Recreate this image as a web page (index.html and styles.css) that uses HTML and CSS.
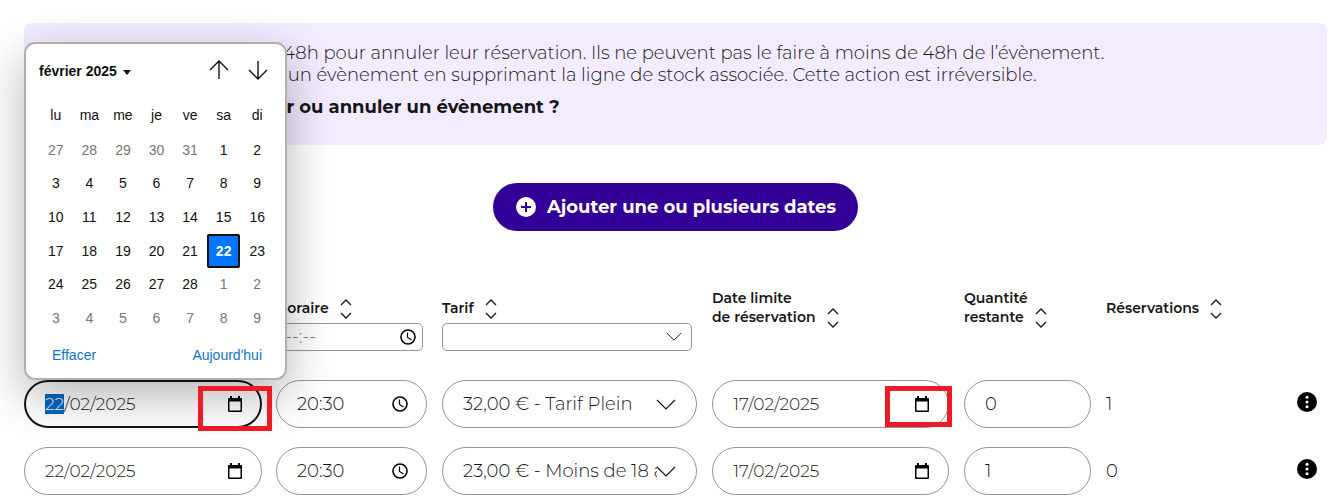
FILE: index.html
```
<!DOCTYPE html>
<html lang="fr">
<head>
    <meta charset="UTF-8">
    <meta name="viewport" content="width=device-width, initial-scale=1.0">
    <title>Dates et capacités</title>
    <link rel="stylesheet" href="styles.css">
</head>
<body>
    <svg class="sprite" aria-hidden="true">
        <symbol id="calendar" viewBox="0 0 14 16">
            <path fill-rule="evenodd" d="M2 0h2v2h6V0h2v2h1q1 0 1 1v12q0 1-1 1H1q-1 0-1-1V3q0-1 1-1h1zM1.500 5.500v9h11v-9z"/>
        </symbol>
        <symbol id="clock" viewBox="0 0 16 16">
            <circle cx="8" cy="8" r="7" fill="none" stroke="currentColor" stroke-width="1.600"/>
            <path d="M7.500 3.500v5l4 2.500" fill="none" stroke="currentColor" stroke-width="1.200"/>
        </symbol>
        <symbol id="sort" viewBox="0 0 12 20">
            <path d="M1 6l5-5 5 5M1 14l5 5 5-5" fill="none" stroke="currentColor" stroke-width="1.300"/>
        </symbol>
        <symbol id="chevron" viewBox="0 0 20 12">
            <path d="M1 1l9 9 9-9" fill="none" stroke="currentColor" stroke-width="1.200"/>
        </symbol>
        <symbol id="dots" viewBox="0 0 20 20">
            <circle cx="10" cy="10" r="10"/>
            <g fill="#fff"><circle cx="10" cy="5.200" r="1.500"/><circle cx="10" cy="10" r="1.500"/><circle cx="10" cy="14.800" r="1.500"/></g>
        </symbol>
    </svg>

    <main class="page">
        <section class="banner">
            <p>Les bénéficiaires ont 48h pour annuler leur réservation. Ils ne peuvent pas le faire à moins de 48h de l’évènement.</p>
            <p>Vous pouvez annuler un évènement en supprimant la ligne de stock associée. Cette action est irréversible.</p>
            <p class="question">Comment désactiver ou annuler un évènement ?</p>
        </section>

        <button type="button" class="add-button">
            <svg width="20" height="20" viewBox="0 0 20 20">
                <circle cx="10" cy="10" r="10" fill="#fff"/>
                <path d="M10 5v10M5 10h10" stroke="#320096" stroke-width="2"/>
            </svg>
            Ajouter une ou plusieurs dates
        </button>

        <table class="stocks">
            <colgroup>
                <col class="col-date">
                <col class="col-time">
                <col class="col-price">
                <col class="col-limit">
                <col class="col-quantity">
                <col>
                <col class="col-menu">
            </colgroup>
            <thead>
                <tr>
                    <th>
                        <label for="filter-date">Date</label>
                        <div class="filter"><input type="text" id="filter-date"></div>
                    </th>
                    <th>
                        <label for="filter-time">Horaire</label><svg class="sort"><use href="#sort"/></svg>
                        <div class="filter filter-time">
                            <input type="text" id="filter-time" placeholder="--:--">
                            <svg class="clock"><use href="#clock"/></svg>
                        </div>
                    </th>
                    <th>
                        <label for="filter-price">Tarif</label><svg class="sort"><use href="#sort"/></svg>
                        <div class="filter filter-price">
                            <select id="filter-price"><option></option></select>
                            <svg class="chevron"><use href="#chevron"/></svg>
                        </div>
                    </th>
                    <th class="two-lines">Date limite<br>de réservation<svg class="sort"><use href="#sort"/></svg></th>
                    <th class="two-lines">Quantité<br>restante<svg class="sort"><use href="#sort"/></svg></th>
                    <th>Réservations<svg class="sort"><use href="#sort"/></svg></th>
                    <th></th>
                </tr>
            </thead>
            <tbody>
                <tr>
                    <td>
                        <div class="field date">
                            <input type="text" id="current-date" value="22/02/2025" aria-label="Date">
                            <svg class="calendar"><use href="#calendar"/></svg>
                            <span class="marker marker-date"></span>
                        </div>
                    </td>
                    <td>
                        <div class="field">
                            <input type="text" value="20:30" aria-label="Horaire">
                            <svg class="clock"><use href="#clock"/></svg>
                        </div>
                    </td>
                    <td>
                        <div class="field">
                            <select aria-label="Tarif"><option>32,00 € - Tarif Plein</option></select>
                            <svg class="chevron"><use href="#chevron"/></svg>
                        </div>
                    </td>
                    <td>
                        <div class="field date">
                            <input type="text" value="17/02/2025" aria-label="Date limite de réservation">
                            <svg class="calendar"><use href="#calendar"/></svg>
                            <span class="marker marker-limit"></span>
                        </div>
                    </td>
                    <td><div class="field"><input type="text" value="0" aria-label="Quantité restante"></div></td>
                    <td>1</td>
                    <td><button type="button" class="menu" aria-label="Actions"><svg><use href="#dots"/></svg></button></td>
                </tr>
                <tr>
                    <td>
                        <div class="field date">
                            <input type="text" value="22/02/2025" aria-label="Date">
                            <svg class="calendar"><use href="#calendar"/></svg>
                        </div>
                    </td>
                    <td>
                        <div class="field">
                            <input type="text" value="20:30" aria-label="Horaire">
                            <svg class="clock"><use href="#clock"/></svg>
                        </div>
                    </td>
                    <td>
                        <div class="field">
                            <select aria-label="Tarif"><option>23,00 € - Moins de 18 ans</option></select>
                            <svg class="chevron"><use href="#chevron"/></svg>
                        </div>
                    </td>
                    <td>
                        <div class="field date">
                            <input type="text" value="17/02/2025" aria-label="Date limite de réservation">
                            <svg class="calendar"><use href="#calendar"/></svg>
                        </div>
                    </td>
                    <td><div class="field"><input type="text" value="1" aria-label="Quantité restante"></div></td>
                    <td>0</td>
                    <td><button type="button" class="menu" aria-label="Actions"><svg><use href="#dots"/></svg></button></td>
                </tr>
            </tbody>
        </table>

        <div class="picker">
            <div class="picker-header">
                <button type="button" class="month">février 2025 <svg width="8" height="5" viewBox="0 0 8 5"><path d="M0 0h8L4 5z"/></svg></button>
                <button type="button" aria-label="Mois précédent"><svg width="20" height="20" viewBox="0 0 20 20"><path d="M10 19V1M1 10l9-9 9 9"/></svg></button>
                <button type="button" aria-label="Mois suivant"><svg width="20" height="20" viewBox="0 0 20 20"><path d="M10 1v18M1 10l9 9 9-9"/></svg></button>
            </div>
            <div class="weekdays">
                <span>lu</span><span>ma</span><span>me</span><span>je</span><span>ve</span><span>sa</span><span>di</span>
            </div>
            <div class="days" id="days"></div>
            <div class="picker-footer">
                <button type="button">Effacer</button>
                <button type="button">Aujourd'hui</button>
            </div>
        </div>
    </main>

    <script>
        const days = document.getElementById('days');
        const start = new Date(2025, 0, 27);

        for (let i = 0; i < 42; i++) {
            const date = new Date(start.getFullYear(), start.getMonth(), start.getDate() + i);
            const button = document.createElement('button');
            button.type = 'button';
            button.textContent = date.getDate();
            if (date.getMonth() !== 1) {
                button.className = 'outside';
            } else if (date.getDate() === 22) {
                button.className = 'selected';
            }
            days.appendChild(button);
        }

        // select the day part of the date being edited
        const current = document.getElementById('current-date');
        current.focus();
        current.setSelectionRange(0, 2);
    </script>
</body>
</html>
```

FILE: styles.css
```
* {
    box-sizing: border-box;
}

body {
    margin: 0;
    background-color: #fff;
    color: #161617;
    font-family: Montserrat, Inter, sans-serif;
    font-size: 18px;
    font-weight: 300;
}

button,
input,
select {
    font: inherit;
    color: inherit;
}

button {
    border: none;
    padding: 0;
    background: none;
    cursor: pointer;
}

svg {
    fill: currentColor;
}

.sprite {
    display: none;
}

.page {
    position: relative;
    padding: 23px 14px 0 24px;
}

.banner {
    height: 122px;
    padding: 19px 20px 0 73px;
    border-radius: 8px;
    background-color: #f3ebff;
    line-height: 22px;
    white-space: nowrap;
}

.banner p {
    margin: 0;
}

.banner .question {
    margin-top: 10px;
    font-weight: 700;
}

.add-button {
    display: flex;
    align-items: center;
    gap: 11px;
    height: 48px;
    margin: 38px auto 58px;
    padding: 0 22px 0 23px;
    border-radius: 24px;
    background-color: #320096;
    color: #fff;
    font-weight: 700;
}

/* stocks table */

.stocks {
    width: 100%;
    table-layout: fixed;
    border-collapse: collapse;
}

.col-date,
.col-limit {
    width: 252px;
}

.col-time {
    width: 166px;
}

.col-price {
    width: 270px;
}

.col-quantity {
    width: 142px;
}

.col-menu {
    width: 30px;
}

.stocks th {
    padding: 10px 15px 29px 0;
    font-size: 14px;
    font-weight: 600;
    line-height: 19px;
    text-align: left;
    vertical-align: top;
    white-space: nowrap;
}

.stocks th.two-lines {
    padding-top: 0;
}

.stocks td {
    padding: 0 15px 19px 0;
}

.stocks td:first-child {
    padding-right: 14px;
}

.stocks th:last-child,
.stocks td:last-child {
    padding-right: 0;
}

.sort {
    width: 12px;
    height: 20px;
    margin: -6px 0 -6px 11px;
    vertical-align: middle;
}

.filter,
.field {
    position: relative;
}

.filter {
    height: 28px;
    margin-top: 5px;
}

.filter-time {
    width: 147px;
}

.filter-price {
    width: 250px;
}

.filter input,
.filter select {
    display: block;
    width: 100%;
    height: 28px;
    padding: 0 8px;
    border: 1px solid #90949d;
    border-radius: 5px;
    background: transparent;
    font-size: 18px;
    font-weight: 300;
    appearance: none;
}

.field input,
.field select {
    display: block;
    width: 100%;
    height: 48px;
    padding: 0 39px 0 20px;
    border: 1px solid #90949d;
    border-radius: 24px;
    background: transparent;
    appearance: none;
}

.field.date input {
    font-size: 17px;
}

.field input:focus {
    padding-left: 19px;
    border: 2px solid #161617;
    outline: none;
}

.field input::selection {
    background-color: #0067c0;
    color: #fff;
}

.calendar,
.clock,
.chevron {
    position: absolute;
    pointer-events: none;
}

.calendar {
    top: 16px;
    right: 20px;
    width: 14px;
    height: 16px;
    color: #000;
}

.clock {
    top: 16px;
    right: 19px;
    width: 16px;
    height: 16px;
    color: #000;
}

.chevron {
    top: 19px;
    right: 21px;
    width: 20px;
    height: 12px;
}

.filter .clock {
    top: 6px;
    right: 7px;
}

.filter .chevron {
    top: 9px;
    right: 10px;
    width: 16px;
    height: 10px;
}

.menu {
    display: block;
    padding-bottom: 4px;
    color: #000;
}

.menu svg {
    display: block;
    width: 20px;
    height: 20px;
}

.marker {
    position: absolute;
    z-index: 2;
    top: 6px;
    border: 5px solid #ed1c24;
    pointer-events: none;
}

.marker-date {
    right: -10px;
    width: 74px;
    height: 45px;
}

.marker-limit {
    right: -3px;
    width: 67px;
    height: 41px;
}

/* date picker */

.picker {
    position: absolute;
    z-index: 1;
    top: 42px;
    left: 24px;
    width: 263px;
    height: 338px;
    padding: 12px 11px 0 13px;
    border: 2px solid #b0b0b2;
    border-radius: 11px;
    background-color: #fff;
    box-shadow: 0 16px 48px rgba(0, 0, 0, 0.3);
    color: #101010;
    font-family: Arial, "Liberation Sans", sans-serif;
    font-size: 14px;
    font-weight: 400;
}

.picker-header {
    display: flex;
    align-items: center;
    gap: 19px;
    height: 30px;
    padding-right: 6px;
}

.picker-header .month {
    margin-right: auto;
    font-weight: 700;
}

.month svg {
    margin-left: 2px;
    vertical-align: middle;
}

.picker-header path {
    stroke: currentColor;
    stroke-width: 1.4;
}

.picker-header button:not(.month) path {
    fill: none;
}

.picker-header .month path {
    stroke: none;
}

.weekdays,
.days {
    display: grid;
    grid-template-columns: repeat(7, 1fr);
    text-align: center;
}

.weekdays {
    height: 47px;
    line-height: 58px;
}

.days {
    grid-template-rows: repeat(6, 1fr);
    height: 202px;
}

.days .outside {
    color: #767676;
}

.days .selected {
    border: 2px solid #101010;
    border-radius: 2px;
    background-color: #0075ff;
    color: #fff;
    font-weight: 700;
}

.picker-footer {
    display: flex;
    justify-content: space-between;
    padding: 12px 12px 0 13px;
    color: #0b76d1;
}
```
